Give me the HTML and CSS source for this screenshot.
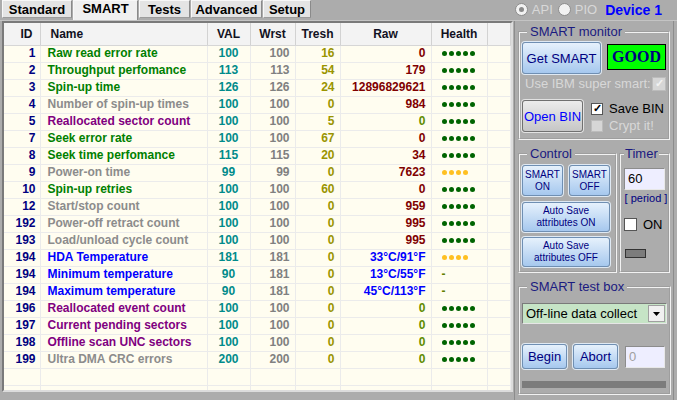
FILE: index.html
```html
<!DOCTYPE html>
<html>

<head>
    <title>SMART</title>
    <link rel="stylesheet" href="styles.css">
</head>

<body>
    <div class="topbar">
        <div class="tabs">
            <div class="tab w-std">Standard</div>
            <div class="tab active w-smart">SMART</div>
            <div class="tab w-tests">Tests</div>
            <div class="tab w-adv">Advanced</div>
            <div class="tab w-setup">Setup</div>
        </div>
        <div class="mode">
            <span class="radio sel"></span><span class="dis">API</span>
            <span class="radio"></span><span class="dis">PIO</span>
            <span class="device">Device 1</span>
        </div>
    </div>

    <div class="main">
        <div class="panel">
            <table class="grid">
                <colgroup>
                    <col class="c-id"><col class="c-name"><col class="c-val"><col class="c-wrst">
                    <col class="c-tresh"><col class="c-raw"><col class="c-health"><col>
                </colgroup>
                <thead>
                    <tr>
                        <th class="h-id">ID</th><th class="h-name">Name</th><th>VAL</th><th>Wrst</th>
                        <th>Tresh</th><th>Raw</th><th>Health</th><th></th>
                    </tr>
                </thead>
                <tbody id="rows"></tbody>
            </table>
        </div>

        <div class="side">
            <fieldset class="group monitor">
                <legend>SMART monitor</legend>
                <div class="mon-row">
                    <button class="btn blue get">Get SMART</button>
                    <div class="status">GOOD</div>
                </div>
                <div class="ibm">
                    <span class="dis">Use IBM super smart:</span>
                    <span class="box off">&#10003;</span>
                </div>
                <div class="bin-row">
                    <button class="btn gray open">Open BIN</button>
                    <div class="checks">
                        <div class="check"><span class="box">&#10003;</span>Save BIN</div>
                        <div class="check dis"><span class="box off"></span>Crypt it!</div>
                    </div>
                </div>
            </fieldset>

            <div class="pair">
                <fieldset class="group control">
                    <legend>Control</legend>
                    <div class="two">
                        <button class="btn blue small">SMART<br>ON</button>
                        <button class="btn blue small">SMART<br>OFF</button>
                    </div>
                    <button class="btn blue small wide first">Auto Save<br>attributes ON</button>
                    <button class="btn blue small wide">Auto Save<br>attributes OFF</button>
                </fieldset>

                <fieldset class="group timer">
                    <legend>Timer</legend>
                    <div class="field period-in">60</div>
                    <div class="period">[ period ]</div>
                    <div class="check on-row"><span class="box"></span>ON</div>
                    <div class="lamp"></div>
                </fieldset>
            </div>

            <fieldset class="group testbox">
                <legend>SMART test box</legend>
                <div class="select">
                    <span>Off-line data collect</span>
                    <span class="drop"><svg width="7" height="4" viewBox="0 0 7 4"><path d="M0 0H7L3.5 4Z" fill="#000"/></svg></span>
                </div>
                <div class="test-row">
                    <button class="btn blue mid">Begin</button>
                    <button class="btn blue mid abort">Abort</button>
                    <div class="field count">0</div>
                </div>
                <div class="progress"></div>
            </fieldset>
        </div>
    </div>

    <script>
        var attrs = [
            [1, "Raw read error rate", "g", 100, 100, 16, "0", "r", "ok"],
            [2, "Throughput perfomance", "g", 113, 113, 54, "179", "r", "ok"],
            [3, "Spin-up time", "g", 126, 126, 24, "12896829621", "r", "ok"],
            [4, "Number of spin-up times", "n", 100, 100, 0, "984", "r", "ok"],
            [5, "Reallocated sector count", "p", 100, 100, 5, "0", "z", "ok"],
            [7, "Seek error rate", "g", 100, 100, 67, "0", "r", "ok"],
            [8, "Seek time perfomance", "g", 115, 115, 20, "34", "r", "ok"],
            [9, "Power-on time", "n", 99, 99, 0, "7623", "r", "warn"],
            [10, "Spin-up retries", "g", 100, 100, 60, "0", "r", "ok"],
            [12, "Start/stop count", "n", 100, 100, 0, "959", "r", "ok"],
            [192, "Power-off retract count", "n", 100, 100, 0, "995", "r", "ok"],
            [193, "Load/unload cycle count", "n", 100, 100, 0, "995", "r", "ok"],
            [194, "HDA Temperature", "b", 181, 181, 0, "33°C/91°F", "b", "warn"],
            [194, "Minimum temperature", "b", 90, 181, 0, "13°C/55°F", "b", "none"],
            [194, "Maximum temperature", "b", 90, 181, 0, "45°C/113°F", "b", "none"],
            [196, "Reallocated event count", "p", 100, 100, 0, "0", "z", "ok"],
            [197, "Current pending sectors", "p", 100, 100, 0, "0", "z", "ok"],
            [198, "Offline scan UNC sectors", "p", 100, 100, 0, "0", "z", "ok"],
            [199, "Ultra DMA CRC errors", "n", 200, 200, 0, "0", "z", "ok"]
        ];

        function health(kind) {
            if (kind == "none") return '<span class="dash">-</span>';
            var n = kind == "ok" ? 5 : 4;
            var html = "";
            for (var i = 0; i < n; i++) html += '<span class="dot ' + kind + '"></span>';
            return html;
        }

        var body = document.getElementById("rows");
        var html = "";
        attrs.forEach(function (a) {
            html += '<tr>' +
                '<td class="id">' + a[0] + '</td>' +
                '<td class="name t-' + a[2] + '">' + a[1] + '</td>' +
                '<td class="val">' + a[3] + '</td>' +
                '<td class="wrst">' + a[4] + '</td>' +
                '<td class="tresh">' + a[5] + '</td>' +
                '<td class="raw r-' + a[7] + '">' + a[6] + '</td>' +
                '<td class="health">' + health(a[8]) + '</td>' +
                '<td></td></tr>';
        });
        html += '<tr class="empty"><td></td><td></td><td></td><td></td><td></td><td></td><td></td><td></td></tr>';
        html += '<tr class="empty"><td></td><td></td><td></td><td></td><td></td><td></td><td></td><td></td></tr>';
        body.innerHTML = html;
    </script>
</body>

</html>
```

FILE: styles.css
```css
* {
    box-sizing: border-box;
}

body {
    margin: 0;
    width: 677px;
    height: 400px;
    overflow: hidden;
    background-color: #acacac;
    font-family: "Liberation Sans", Arial, sans-serif;
}

/* top strip */
.topbar {
    display: flex;
    height: 21px;
    border-bottom: 1px solid #c4c4c4;
}

.tabs {
    display: flex;
    gap: 1px;
    padding-left: 2px;
    align-items: flex-start;
}

.tab {
    height: 18px;
    background-color: #e4e4e4;
    border: 1px solid #f8f8f8;
    border-right-color: #8a8a8a;
    border-bottom-color: #9c9c9c;
    font-size: 13px;
    font-weight: bold;
    line-height: 17px;
    text-align: center;
    color: #000;
}

.tab.active {
    height: 20px;
    background-color: #f0f0f0;
    border-bottom: none;
    line-height: 15px;
}

.w-std { width: 70px; }
.w-smart { width: 65px; }
.w-tests { width: 51px; }
.w-adv { width: 71px; }
.w-setup { width: 48px; }

.mode {
    display: flex;
    align-items: center;
    height: 19px;
    margin-left: auto;
    margin-right: 15px;
    font-size: 13px;
}

.radio {
    width: 13px;
    height: 13px;
    border-radius: 50%;
    border: 1px solid #8c8c8c;
    background-color: #f2f2f2;
    margin-right: 4px;
    display: flex;
    align-items: center;
    justify-content: center;
}

.radio.sel::after {
    content: "";
    width: 5px;
    height: 5px;
    border-radius: 50%;
    background-color: #8a8a8a;
}

.mode .dis {
    margin-right: 5px;
}

.dis {
    color: #d8d8d8;
}

.device {
    margin-left: 3px;
    font-size: 14px;
    font-weight: bold;
    color: #0000ff;
}

/* main area */
.main {
    display: flex;
    height: 379px;
}

.panel {
    width: 511px;
    height: 371px;
    margin-left: 2px;
    overflow: hidden;
    background-color: #fffdf0;
    border: 2px solid #dcdcdc;
    border-top-color: #7a7a7a;
    border-left-color: #7a7a7a;
}

.grid {
    width: 100%;
    table-layout: fixed;
    border-collapse: collapse;
    font-size: 12px;
    font-weight: bold;
}

.c-id { width: 36px; }
.c-name { width: 167px; }
.c-val { width: 43px; }
.c-wrst { width: 45px; }
.c-tresh { width: 45px; }
.c-raw { width: 91px; }
.c-health { width: 56px; }

.grid th {
    height: 22px;
    padding: 0;
    background-color: #f3f3f3;
    border-right: 1px solid #d2d2d2;
    border-bottom: 1px solid #d6d6d6;
    color: #111122;
    text-align: center;
}

.grid th.h-id {
    text-align: right;
    padding-right: 7px;
}

.grid th.h-name {
    text-align: left;
    padding-left: 10px;
}

.grid tr {
    height: 17px;
}

.grid td {
    padding: 0;
    line-height: 15px;
    border-right: 1px solid #ebebeb;
    border-bottom: 1px solid #ebebeb;
    white-space: nowrap;
    overflow: hidden;
}

.id {
    text-align: right;
    padding-right: 4px !important;
    color: #000080;
}

.name {
    padding-left: 7px !important;
}

.t-g { color: #008000; }
.t-n { color: #8c8c8c; }
.t-p { color: #800080; }
.t-b { color: #0000ff; }

.val {
    text-align: center;
    color: #008b8b;
}

.wrst {
    text-align: right;
    padding-right: 5px !important;
    color: #808080;
}

.tresh {
    text-align: right;
    padding-right: 5px !important;
    color: #9a9400;
}

.raw {
    text-align: right;
    padding-right: 5px !important;
}

.r-r { color: #800000; }
.r-b { color: #0000ff; }
.r-z { color: #5f8c00; }

.health {
    padding-left: 10px !important;
}

.dot {
    display: inline-block;
    width: 5px;
    height: 5px;
    border-radius: 50%;
    margin-right: 2px;
    vertical-align: 1px;
}

.dot.ok { background-color: #006400; }
.dot.warn { background-color: #ffc020; }

.dash {
    color: #5f7f00;
}

/* side panel */
.side {
    width: 160px;
    margin-left: 1px;
    padding: 3px 2px 0 3px;
    border-left: 1px solid #8c8c8c;
    border-right: 1px solid #8c8c8c;
}

.group {
    margin: 0;
    border: 2px groove #f2f2f2;
    padding: 0 2px;
}

.group legend {
    font-size: 13px;
    line-height: 15px;
    color: #1a1a80;
    padding: 0 3px;
    margin-left: 5px;
}

.btn {
    display: block;
    padding: 0;
    font-family: "Liberation Sans", Arial, sans-serif;
    border-radius: 3px;
    cursor: default;
}

.btn.blue {
    background: linear-gradient(#e6f1fc, #a6c8ee);
    border: 1px solid #6f8fb3;
    box-shadow: 0 0 0 1px #dfe9f3;
    color: #000080;
}

.btn.gray {
    background: linear-gradient(#ececec, #c6c6c6);
    border: 1px solid #707070;
    box-shadow: 0 0 0 1px #e2e2e2;
    color: #0000ff;
}

.monitor {
    width: 150px;
    padding-top: 3px;
    padding-bottom: 4px;
}

.mon-row {
    display: flex;
    align-items: flex-start;
}

.get {
    width: 79px;
    height: 32px;
    font-size: 13px;
}

.status {
    width: 59px;
    height: 26px;
    margin: 2px 0 0 6px;
    background-color: #00ff00;
    border: 1px solid #000;
    font-family: "Liberation Serif", "Times New Roman", serif;
    font-weight: bold;
    font-size: 16px;
    line-height: 24px;
    text-align: center;
    color: #000080;
}

.ibm {
    display: flex;
    justify-content: space-between;
    align-items: center;
    height: 15px;
    margin-top: 2px;
    padding-left: 3px;
    font-size: 13px;
}

.box {
    display: inline-flex;
    align-items: center;
    justify-content: center;
    width: 12px;
    height: 12px;
    margin-right: 6px;
    background-color: #fff;
    border: 1px solid #555;
    font-size: 11px;
    font-weight: bold;
    color: #000;
}

.box.off {
    background-color: #d6d6d6;
    border-color: #bcbcbc;
    color: #f2f2f2;
}

.ibm .box {
    width: 14px;
    height: 14px;
    margin-right: 0;
}

.bin-row {
    display: flex;
    margin-top: 9px;
}

.open {
    width: 61px;
    height: 32px;
    font-size: 13px;
}

.checks {
    margin-left: 8px;
}

.check {
    display: flex;
    align-items: center;
    height: 17px;
    font-size: 13px;
    color: #000;
}

.check.dis {
    color: #d8d8d8;
}

.pair {
    display: flex;
    margin-top: 6px;
}

.control {
    width: 99px;
    padding-top: 4px;
    padding-bottom: 4px;
}

.two {
    display: flex;
    gap: 6px;
}

.small {
    font-size: 10px;
    line-height: 12px;
}

.two .small {
    width: 41px;
    height: 31px;
}

.wide {
    width: 88px;
    height: 30px;
    margin-top: 5px;
}

.wide.first {
    margin-top: 6px;
}

.timer {
    width: 50px;
    margin-left: 2px;
    padding: 7px 0 4px 3px;
}

.timer legend {
    margin-left: 0;
    padding: 0 1px;
}

.field {
    background-color: #eeeeff;
    border: 1px solid #8c8c8c;
    border-right-color: #e8e8e8;
    border-bottom-color: #e8e8e8;
    font-size: 13px;
    padding-left: 3px;
}

.period-in {
    width: 41px;
    height: 22px;
    line-height: 20px;
    color: #000;
}

.period {
    width: 44px;
    font-size: 11px;
    line-height: 16px;
    text-align: center;
    color: #000080;
}

.on-row {
    margin-top: 11px;
    height: 15px;
}

.on-row .box {
    width: 13px;
    height: 13px;
}

.lamp {
    width: 21px;
    height: 9px;
    margin: 17px 0 0 1px;
    background-color: #7c7c7c;
    border: 1px solid #333;
}

.testbox {
    width: 153px;
    margin-top: 6px;
    padding-top: 9px;
    padding-bottom: 5px;
}

.select {
    display: flex;
    align-items: center;
    justify-content: space-between;
    width: 145px;
    height: 21px;
    padding: 0 1px 0 3px;
    background-color: #c6e4c6;
    border: 1px solid #7a7a7a;
    border-right-color: #e6e6e6;
    border-bottom-color: #e6e6e6;
    font-size: 13px;
    color: #000;
}

.drop {
    display: flex;
    align-items: center;
    justify-content: center;
    width: 17px;
    height: 17px;
    background-color: #f0f0f0;
    border: 1px solid #a0a0a0;
}

.test-row {
    display: flex;
    align-items: flex-start;
    margin-top: 20px;
}

.mid {
    width: 45px;
    height: 25px;
    font-size: 13px;
}

.abort {
    margin-left: 6px;
}

.count {
    width: 40px;
    height: 22px;
    margin: 2px 0 0 7px;
    line-height: 20px;
    color: #a0a0a0;
}

.progress {
    width: 144px;
    height: 7px;
    margin-top: 12px;
    background-color: #7c7c7c;
}
```
